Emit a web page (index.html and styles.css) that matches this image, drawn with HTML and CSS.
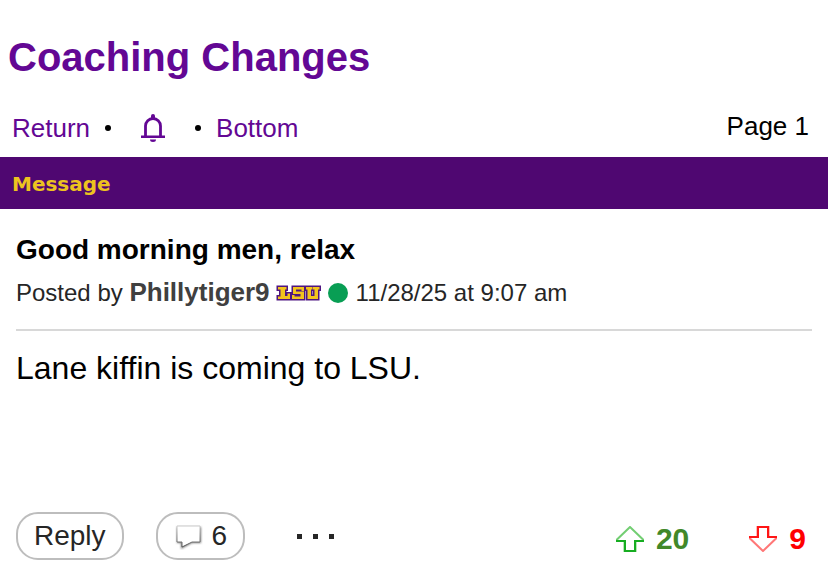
FILE: index.html
```html
<!DOCTYPE html>
<html lang="en">
<head>
<meta charset="utf-8">
<meta name="viewport" content="width=device-width, initial-scale=1">
<title>Coaching Changes</title>
<link rel="stylesheet" href="styles.css">
</head>
<body>
<header>
  <h1 class="title">Coaching Changes</h1>
  <nav class="nav">
    <a href="#">Return</a>
    <span class="dot"></span>
    <a class="bell" href="#" aria-label="Notifications">
      <svg width="24" height="28" viewBox="0 0 24 28">
        <path d="M4.500 22V12a7.500 7.500 0 0 1 15 0v10" fill="none" stroke="currentColor" stroke-width="2.800"/>
        <path d="M0 21.500h24v2.500H0zM10 5V2a2 2 0 0 1 4 0v3zM9 25.500h6a3 2.500 0 0 1-6 0z" fill="currentColor"/>
      </svg>
    </a>
    <span class="dot"></span>
    <a href="#">Bottom</a>
    <span class="page">Page 1</span>
  </nav>
</header>
<main>
  <h2 class="bar">Message</h2>
  <article class="post">
    <h3 class="subject">Good morning men, relax</h3>
    <div class="byline">
      <span>Posted by <a class="author" href="#">Phillytiger9</a></span>
      <svg class="team" width="45" height="16" viewBox="0 0 45 16" role="img" aria-label="LSU">
        <path class="mark" d="M2 2h8.500v2.500H9V11h2.500V8.500H14V14H2v-2.500h2.500v-7H2zM17 2h11v4h-2.500V4.500H20v2h8V14H16v-4h2.500v1.500h6V9H17zM30 2h6.500v2.500H35v6.500h3.500V4.500H37V2h6.500v2.500H42V14H31.500V4.500H30z"/>
      </svg>
      <span class="online"></span>
      <time>11/28/25 at 9:07 am</time>
    </div>
    <p class="message">Lane kiffin is coming to LSU.</p>
    <footer class="actions">
      <button class="pill">Reply</button>
      <button class="pill replies" aria-label="6 replies">
        <svg width="30" height="28" viewBox="0 0 30 28">
          <defs>
            <linearGradient id="edge" x1="0" y1="0" x2="0" y2="1"><stop offset="0" stop-color="#ccc"/><stop offset="1" stop-color="#555"/></linearGradient>
            <filter id="shade" x="-20%" y="-20%" width="140%" height="140%"><feGaussianBlur stdDeviation="1"/></filter>
          </defs>
          <path d="M3 5h24v16h-9l-11 6v-6H3z" fill="#777" filter="url(#shade)"/>
          <path d="M3 4h23v16h-8L8 25v-5H3z" fill="#fff" stroke="url(#edge)" stroke-width="1"/>
        </svg>
        <span>6</span>
      </button>
      <button class="more" aria-label="More options"><i></i><i></i><i></i></button>
      <button class="vote up">
        <svg width="28" height="26" viewBox="0 0 28 26"><path d="M14 1L1 13.500V15h7.500v10h11V15H27v-1.500z" fill="#fff" stroke="#73ce73" stroke-width="2"/><path d="M0 15h9v10h10V15h9" fill="none" stroke="#17ad22" stroke-width="2"/></svg>
        <span>20</span>
      </button>
      <button class="vote down">
        <svg width="28" height="26" viewBox="0 0 28 26"><path d="M14 25L1 12.500V11h7.500V1h11v10H27v1.500z" fill="#fff" stroke="#ff7777" stroke-width="2"/><path d="M0 11h9V1h10v10h9" fill="none" stroke="#ff1515" stroke-width="2"/></svg>
        <span>9</span>
      </button>
    </footer>
  </article>
</main>
</body>
</html>
```
FILE: styles.css
```css
* { box-sizing: border-box; }

body {
  margin: 0;
  background: #fff;
  color: #000;
  font-family: "Liberation Sans", Arial, sans-serif;
}

h1, h2, h3, p { margin: 0; }
a { color: #630794; text-decoration: none; }

button {
  padding: 0;
  border: 0;
  background: none;
  color: #262626;
  font: inherit;
  cursor: pointer;
}

svg { display: block; flex: none; }

.title {
  padding: 34px 8px 0;
  color: #630794;
  font-size: 40px;
  line-height: 46px;
}

.nav {
  display: flex;
  align-items: center;
  padding: 32px 19px 13px 12px;
  font-size: 26px;
  line-height: 32px;
}

.dot {
  width: 6px;
  height: 6px;
  margin: 0 15px;
  border-radius: 50%;
  background: #000;
}

.bell { margin: 0 15px; }

.page {
  margin-left: auto;
  padding-bottom: 3px;
  line-height: 29px;
}

.bar {
  padding: 13px 12px 11px;
  background: #4f0771;
  color: #edc31f;
  font-family: "DejaVu Sans", Verdana, sans-serif;
  font-size: 20px;
  line-height: 28px;
}

.post { padding: 25px 16px 16px; }

.subject {
  font-size: 28px;
  line-height: 32px;
}

.byline {
  display: flex;
  align-items: center;
  padding: 11px 0 21px;
  border-bottom: 2px solid #d8d8d8;
  color: #262626;
  font-size: 24px;
  line-height: 30px;
}

.author {
  color: #404040;
  font-size: 26px;
  font-weight: bold;
}

.team { margin: 0 7px 0 6px; }

.mark {
  fill: #f3c51c;
  stroke: #4f1681;
  stroke-width: 3px;
  paint-order: stroke;
}

.online {
  width: 20px;
  height: 20px;
  margin-right: 8px;
  border-radius: 50%;
  background: #089e54;
}

.message {
  min-height: 181px;
  padding-top: 17px;
  font-size: 32px;
  line-height: 40px;
}

.actions {
  display: flex;
  align-items: center;
}

.pill {
  height: 48px;
  padding: 0 16px;
  border: 2px solid #bdbdbd;
  border-radius: 22px;
  font-size: 28px;
}

.replies {
  display: flex;
  align-items: center;
  gap: 8px;
  margin-left: 32px;
}

.more {
  display: flex;
  gap: 11px;
  margin: 0 16px 0 52px;
}

.more i {
  width: 5px;
  height: 5px;
  background: #262626;
}

.vote {
  display: flex;
  align-items: center;
  gap: 12px;
  padding-top: 6px;
  font-size: 30px;
  font-weight: bold;
}

.up { margin-left: auto; color: #418829; }
.down { margin: 0 6px 0 60px; color: #f00; }
```
